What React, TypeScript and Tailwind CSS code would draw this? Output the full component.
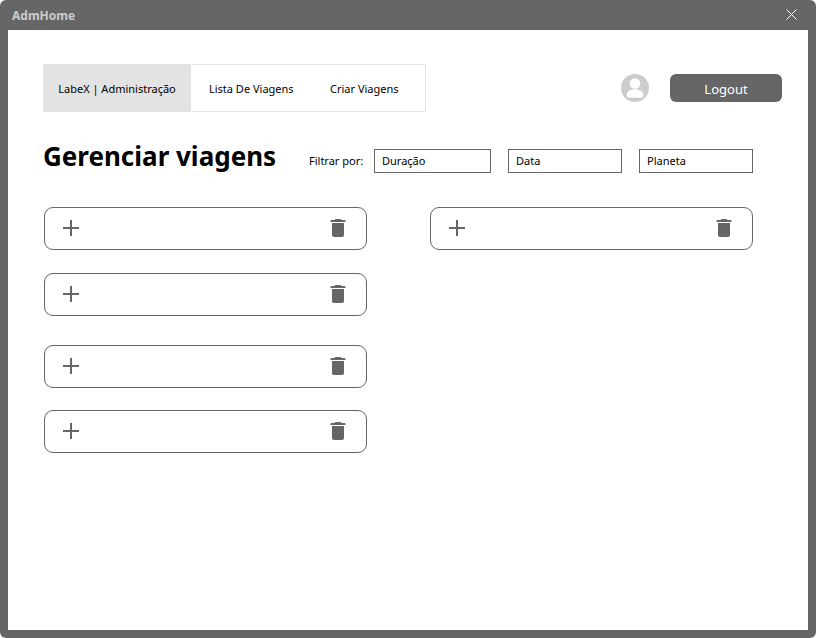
import React from "react";

function PlusIcon() {
  return (
    <svg width="16" height="16" viewBox="0 0 16 16" fill="#666666" shapeRendering="crispEdges" aria-hidden="true">
      <path d="M7 0h2v7h7v2H9v7H7V9H0V7h7z" />
    </svg>
  );
}

function TrashIcon() {
  return (
    <svg width="16" height="18" viewBox="0 0 16 18" fill="#666666" aria-hidden="true">
      <path d="M4.500 1l1-1h5l1 1h3.100q.9 0 .9 1v1H.5V2q0-1 .9-1z" />
      <path d="M2 4h12v12q0 2-2 2H4q-2 0-2-2z" />
    </svg>
  );
}

function AvatarIcon() {
  return (
    <svg width="28" height="28" viewBox="0 0 28 28" role="img" aria-label="Administrador">
      <circle cx="14" cy="14" r="14" fill="#cccccc" />
      <circle cx="14" cy="9.5" r="5.3" fill="#ffffff" />
      <path d="M5.700 21.500c0-4 3-6.200 8.300-6.200s8.300 2.200 8.300 6.200q0 2.300-2.300 2.300H8q-2.300 0-2.300-2.300z" fill="#ffffff" />
    </svg>
  );
}

function TripCard() {
  return (
    <li className="flex h-[43px] items-center justify-between rounded-[9px] border border-[#666666] pr-5 pb-0.5 pl-[18px]">
      <button type="button" aria-label="Adicionar">
        <PlusIcon />
      </button>
      <button type="button" aria-label="Excluir">
        <TrashIcon />
      </button>
    </li>
  );
}

function FilterBox({ label }: { label: string }) {
  return (
    <input
      type="text"
      aria-label={label}
      placeholder={label}
      className="h-6 w-full min-w-0 border border-[#666666] bg-white px-[7px] pb-0.5 text-[11px] text-black placeholder:text-black"
    />
  );
}

export default function App() {
  return (
    <div className="flex min-h-screen flex-col rounded-[6px] bg-[#666666] px-2 pb-2 font-['Noto_Sans',sans-serif] text-[11px] leading-4 text-black">
      <header className="flex h-[30px] items-center justify-between pr-[11px] pl-1 text-[#cccccc]">
        <span className="pt-px text-[12px] font-bold">AdmHome</span>
        <button type="button" aria-label="Fechar" className="pb-px">
          <svg width="11" height="11" viewBox="0 0 11 11" stroke="#ffffff" strokeWidth="1" aria-hidden="true">
            <path d="M.5.5l10 10M10.500.5l-10 10" />
          </svg>
        </button>
      </header>

      <main className="flex-1 bg-white pt-[34px] pr-[26px] pl-[35px]">
        <div className="flex items-center justify-between">
          <nav className="flex h-12 border border-[#e3e3e3] pr-[25px] whitespace-nowrap">
            <a href="#admin" className="-my-px -ml-px flex w-[148px] items-center justify-center bg-[#e3e3e3] pt-px">
              LabeX | Administração
            </a>
            <a href="#lista" className="ml-[18px] flex w-[121px] items-center pt-px">
              Lista De Viagens
            </a>
            <a href="#criar" className="flex w-[70px] items-center pt-px">
              Criar Viagens
            </a>
          </nav>
          <div className="flex items-center gap-[21px]">
            <AvatarIcon />
            <button type="button" className="h-7 w-28 rounded-[6px] bg-[#666666] pt-px text-[13px] text-white">
              Logout
            </button>
          </div>
        </div>

        <div className="mt-[29px] flex items-end pr-[29px]">
          <h1 className="w-[266px] shrink-0 pb-px text-[26px] leading-[31px] font-bold whitespace-nowrap">Gerenciar viagens</h1>
          <span className="w-[65px] shrink-0 pb-1 whitespace-nowrap">Filtrar por:</span>
          <div className="grid flex-1 grid-cols-[117fr_114fr_114fr] gap-[17px]">
            <FilterBox label="Duração" />
            <FilterBox label="Data" />
            <FilterBox label="Planeta" />
          </div>
        </div>

        <div className="mt-[34px] grid grid-cols-2 gap-x-[63px] pr-[29px] pl-px">
          <div className="flex flex-col gap-[29px]">
            <ul className="flex flex-col gap-[23px]">
              <TripCard />
              <TripCard />
            </ul>
            <ul className="flex flex-col gap-[22px]">
              <TripCard />
              <TripCard />
            </ul>
          </div>
          <ul>
            <TripCard />
          </ul>
        </div>
      </main>
    </div>
  );
}
